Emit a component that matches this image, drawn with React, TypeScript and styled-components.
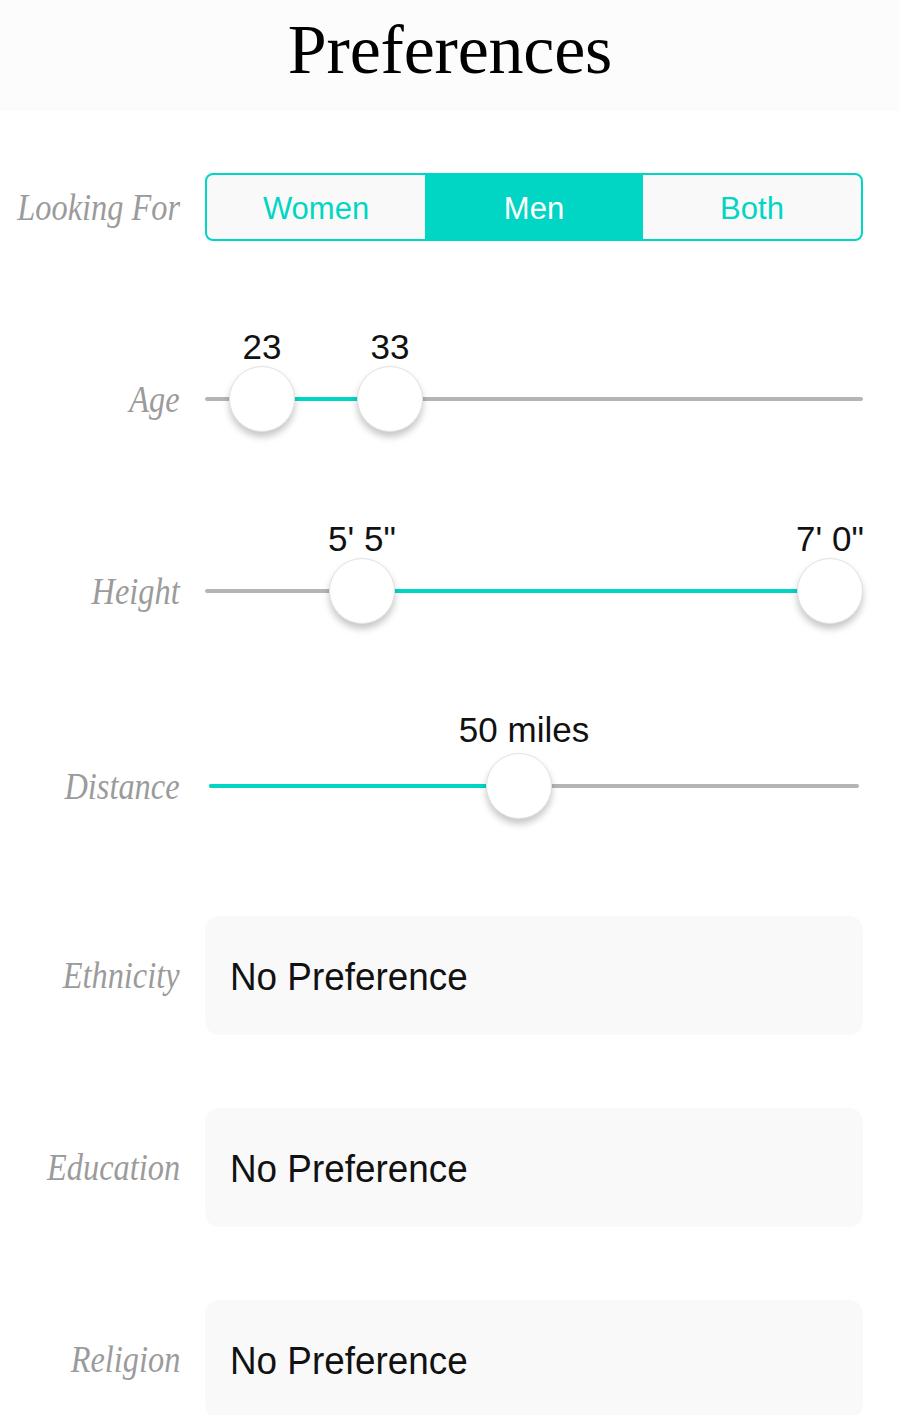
import React from "react";
import styled, { createGlobalStyle } from "styled-components";

const TEAL = "#00d6c3";

const Global = createGlobalStyle`
  html, body { margin: 0; padding: 0; background: #ffffff; }
  body { font-family: "Liberation Sans", Arial, sans-serif; overflow: hidden; }
`;

const Page = styled.div`
  width: 900px;
  height: 1415px;
  overflow: hidden;
  background: #ffffff;
`;

const Header = styled.header`
  height: 111px;
  background: #fcfcfc;
  display: flex;
  align-items: flex-start;
  justify-content: center;
`;

const Title = styled.h1`
  margin: 0;
  padding-top: 10px;
  font-family: "Liberation Serif", "Times New Roman", serif;
  font-weight: 400;
  font-size: 70px;
  line-height: 80px;
  color: #000;
  letter-spacing: -0.2px;
`;

const Row = styled.div<{ $shift?: number }>`
  height: 192px;
  display: grid;
  grid-template-columns: 180px 658px;
  column-gap: 25px;
  align-items: center;
  padding-top: ${(p) => p.$shift ?? 0}px;
  box-sizing: border-box;
`;

const Label = styled.div`
  display: flex;
  justify-content: flex-end;
  min-width: 0;
`;

const LabelText = styled.span`
  display: inline-block;
  font-family: "Liberation Serif", "Times New Roman", serif;
  font-style: italic;
  font-size: 37px;
  color: #9b9b9b;
  white-space: nowrap;
  transform: scaleX(0.875);
  transform-origin: right center;
`;

const Segmented = styled.div`
  height: 68px;
  box-sizing: border-box;
  border: 2px solid ${TEAL};
  border-radius: 8px;
  overflow: hidden;
  display: grid;
  grid-template-columns: 1fr 1fr 1fr;
  background: #f9f9f9;
`;

const Segment = styled.div<{ $active?: boolean }>`
  display: flex;
  align-items: center;
  justify-content: center;
  padding-top: 4px;
  font-size: 31px;
  color: ${(p) => (p.$active ? "#ffffff" : TEAL)};
  background: ${(p) => (p.$active ? TEAL : "transparent")};
`;

const SliderArea = styled.div`
  position: relative;
  height: 4px;
`;

const Track = styled.div<{ $inset?: number }>`
  position: absolute;
  top: 0;
  left: ${(p) => p.$inset ?? 0}px;
  right: ${(p) => p.$inset ?? 0}px;
  height: 4px;
  border-radius: 2px;
  background: #b4b4b4;
`;

const Fill = styled.div`
  position: absolute;
  top: 0;
  height: 4px;
  border-radius: 2px;
  background: ${TEAL};
`;

const Thumb = styled.div`
  position: absolute;
  top: 2px;
  width: 66px;
  height: 66px;
  margin-left: -33px;
  margin-top: -33px;
  border-radius: 50%;
  background: #ffffff;
  box-sizing: border-box;
  border: 1px solid #e2e2e2;
  box-shadow: 0 5px 7px rgba(0, 0, 0, 0.22);
`;

const Value = styled.div<{ $lift?: number }>`
  position: absolute;
  top: ${(p) => -(p.$lift ?? 70)}px;
  transform: translateX(-50%);
  font-size: 35px;
  line-height: 40px;
  color: #111;
  white-space: nowrap;
`;

const Box = styled.div`
  height: 119px;
  border-radius: 14px;
  background: #f9f9f9;
  display: flex;
  align-items: center;
  padding-left: 25px;
  padding-top: 5px;
  box-sizing: border-box;
`;

const BoxText = styled.span`
  display: inline-block;
  font-size: 38px;
  color: #111;
  transform: scaleX(0.97);
  transform-origin: left center;
  white-space: nowrap;
`;

type SliderProps = {
  thumbs: number[]; // thumb centres in px relative to the slider start
  values: string[];
  valueOffsets?: number[];
  range: boolean;
  inset?: number;
  lift?: number;
};

const Slider: React.FC<SliderProps> = ({ thumbs, values, valueOffsets, range, inset = 0, lift }) => {
  const fillLeft = range ? thumbs[0] : inset;
  const fillRight = range ? thumbs[1] : thumbs[0];
  return (
    <SliderArea>
      <Track $inset={inset} />
      <Fill style={{ left: fillLeft, width: fillRight - fillLeft }} />
      {thumbs.map((x, i) => (
        <React.Fragment key={i}>
          <Value $lift={lift} style={{ left: x + (valueOffsets?.[i] ?? 0) }}>
            {values[i]}
          </Value>
          <Thumb style={{ left: x }} />
        </React.Fragment>
      ))}
    </SliderArea>
  );
};

const Field: React.FC<{ label: string }> = ({ label }) => (
  <Row>
    <Label>
      <LabelText>{label}</LabelText>
    </Label>
    <Box>
      <BoxText>No Preference</BoxText>
    </Box>
  </Row>
);

export default function App() {
  return (
    <Page>
      <Global />
      <Header>
        <Title>Preferences</Title>
      </Header>

      <Row>
        <Label>
          <LabelText>Looking For</LabelText>
        </Label>
        <Segmented>
          <Segment>Women</Segment>
          <Segment $active>Men</Segment>
          <Segment>Both</Segment>
        </Segmented>
      </Row>

      <Row>
        <Label>
          <LabelText>Age</LabelText>
        </Label>
        <Slider thumbs={[57, 185]} values={["23", "33"]} range />
      </Row>

      <Row>
        <Label>
          <LabelText>Height</LabelText>
        </Label>
        <Slider thumbs={[157, 625]} values={["5' 5\"", "7' 0\""]} range />
      </Row>

      <Row $shift={6}>
        <Label>
          <LabelText>Distance</LabelText>
        </Label>
        <Slider
          thumbs={[314]}
          values={["50 miles"]}
          valueOffsets={[5]}
          range={false}
          inset={4}
          lift={74}
        />
      </Row>

      <Field label="Ethnicity" />
      <Field label="Education" />
      <Field label="Religion" />
    </Page>
  );
}
